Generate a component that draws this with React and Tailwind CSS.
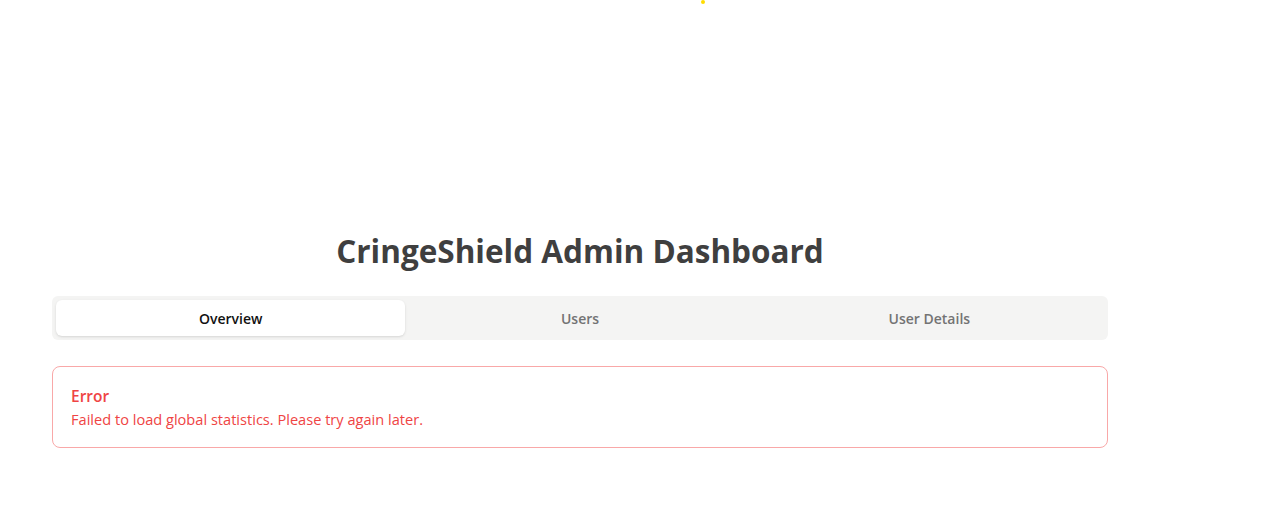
export default function App() {
  const font = { fontFamily: '"Open Sans", "Noto Sans", sans-serif' };
  return (
    <div className="relative min-h-[523px] w-full bg-white" style={font}>
      <div className="absolute left-[701px] top-0 h-[4px] w-[4px] rounded-full bg-[#ffdc00]" />
      <div className="pl-[52px] pt-[233px]">
        <div className="w-[1056px]">
          <h1 className="text-center text-[31.5px] font-bold leading-[36px] text-[#3f3f3f]">
            CringeShield Admin Dashboard
          </h1>
          <div className="mt-[27px] grid h-[44px] grid-cols-3 rounded-md bg-[#f4f4f3] p-1">
            <div className="flex items-center justify-center rounded-md bg-white text-[14px] font-semibold text-[#111] shadow-sm">
              Overview
            </div>
            <div className="flex items-center justify-center text-[14px] font-semibold text-[#737373]">
              Users
            </div>
            <div className="flex items-center justify-center text-[14px] font-semibold text-[#737373]">
              User Details
            </div>
          </div>
          <div className="mt-[26px] rounded-lg border border-[#f9a8a8] px-[18px] py-[17px]">
            <div className="text-[15.5px] font-semibold leading-[24px] text-[#ef4444]">Error</div>
            <div className="text-[14.6px] leading-[22px] text-[#ef4444]">
              Failed to load global statistics. Please try again later.
            </div>
          </div>
        </div>
      </div>
    </div>
  );
}
